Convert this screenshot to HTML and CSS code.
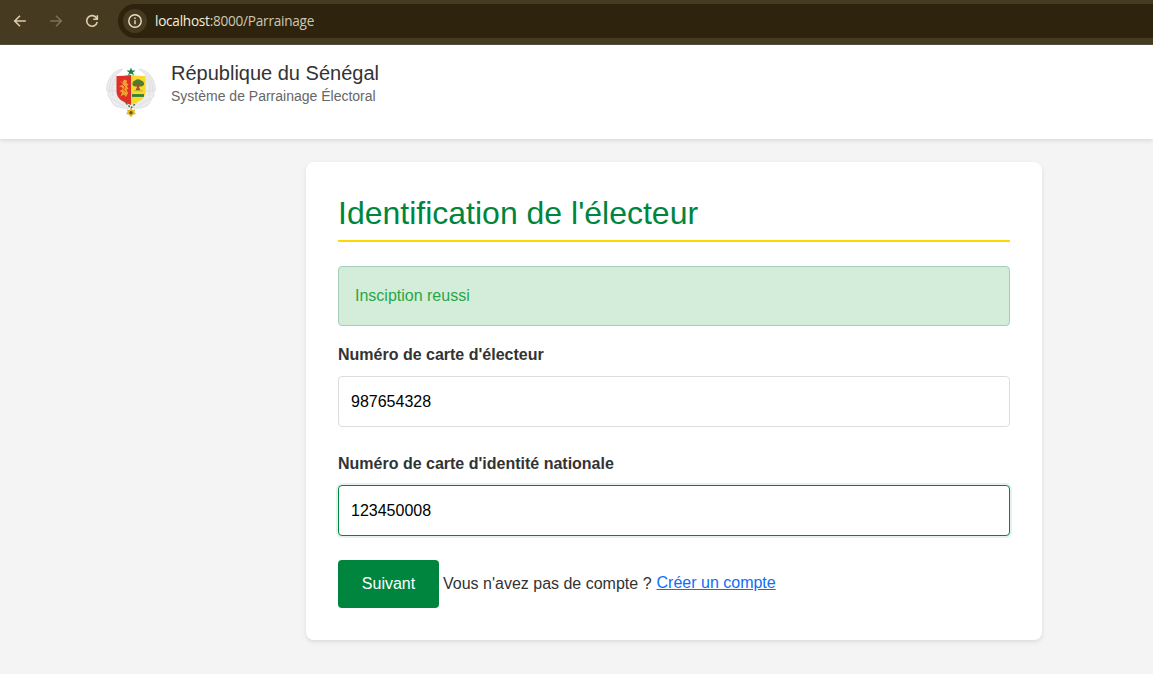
FILE: index.html
```html
<!DOCTYPE html>
<html lang="fr">
<head>
<meta charset="utf-8">
<title>Parrainage</title>
<link rel="stylesheet" href="styles.css">
</head>
<body>
<div class="browser">
  <svg class="nav" width="16" height="16" viewBox="0 0 16 16"><path d="M13.8 8H3M8 2.7 2.7 8 8 13.3"/></svg>
  <svg class="nav nav-off" width="16" height="16" viewBox="0 0 16 16"><path d="M2.2 8H13M8 2.7 13.3 8 8 13.3"/></svg>
  <svg class="nav" width="16" height="16" viewBox="0 0 16 16"><path d="M12.7 5.4A5.3 5.3 0 1 0 13.2 9M13.3 2.3V6.3H9.2"/></svg>
  <div class="address">
    <span class="info"><svg width="16" height="16" viewBox="0 0 16 16"><circle cx="8" cy="8" r="6.2"/><path d="M8 7.2V11.3M8 4.5V6"/></svg></span>
    <span class="url"><b>localhost</b>:8000/Parrainage</span>
  </div>
</div>
<header class="header">
  <svg class="logo" width="50" height="50" viewBox="0 0 50 50">
    <g fill="#ececec" stroke="#d8d8d8" stroke-width=".7">
      <path d="M17 2C8 3 1 11 .5 23 2 25 3 26 2 29 6 33 6 39 12 40 17 41 20 42 23 41L23 35 11 27 10 8Z"/>
      <path d="M33 2C42 3 49 11 49.500 23 48 25 47 26 48 29 44 33 44 39 38 40 33 41 30 42 27 41L27 35 39 27 40 8Z"/>
      <path fill="none" d="M8 8Q3 15 3 24M9 12Q4 19 7 29M2 24H10M5 31 18 39M42 8Q47 15 47 24M41 12Q46 19 43 29M48 24H40M45 31 32 39"/>
    </g>
    <path fill="#df3027" d="M10.500 9Q18 9 25 8V38C17 35 10.500 32 10.500 24Z"/>
    <path fill="#f7d92e" d="M25 8Q32 9 39.500 9V24C39.500 32 33 35 25 38Z"/>
    <path fill="#f0a030" d="M14 14 16.500 15.500 18 12.500 21 13.500 20.500 16 22.500 17.500 21 19 22.500 22 20.500 22.500 22 26 20 30 18 27.500 14.500 29.500 16 25.500 13.500 24 17 22 15.500 20 13 19.500 17 17.500Z"/>
    <path fill="none" stroke="#df3027" stroke-width=".8" d="M17 18 19 20 17.500 23 20 25M15 16H17"/>
    <path fill="#4d7d2d" d="M26.500 18Q26 14 29 13.500 32 11 35 13.500 38.500 14 38 18 35 20.500 32 19 28.500 20.500 26.500 18Z"/>
    <path fill="#a0522d" d="M30 17H34L33 20 34.500 23.500H29.500L31 20Z"/>
    <path stroke="#b9b62c" stroke-width="1" d="M28 23.800H37"/>
    <path stroke="#31813d" stroke-width="2.800" d="M26 28.500H38"/>
    <path fill="#138447" d="M25 .5 26.200 3.500H29.500L26.900 5.400 28 8.500 25 6.600 22 8.500 23.100 5.400 20.500 3.500H23.800Z"/>
    <path stroke="#20784a" stroke-width="1.500" stroke-dasharray="2 1.500" d="M20 36 25 41 30 36" fill="none"/>
    <path fill="#e5b928" d="M25 41 26.500 43 29 42.500 28.500 45 30 47 27.500 47.500 25 50 22.500 47.500 20 47 21.500 45 21 42.500 23.500 43Z"/>
    <circle cx="25" cy="45.700" r="1.700" fill="#625a24"/>
  </svg>
  <div>
    <div class="state">République du Sénégal</div>
    <div class="system">Système de Parrainage Électoral</div>
  </div>
</header>
<main class="card">
  <h1 class="title">Identification de l'électeur</h1>
  <div class="alert">Insciption reussi</div>
  <form>
    <label class="label" for="voter">Numéro de carte d'électeur</label>
    <input class="field" id="voter" type="text" value="987654328">
    <label class="label" for="identity">Numéro de carte d'identité nationale</label>
    <input class="field field-active" id="identity" type="text" value="123450008">
    <div class="actions">
      <button class="submit" type="button">Suivant</button>
      <span class="question">Vous n'avez pas de compte ?</span>
      <a class="link" href="#">Créer un compte</a>
    </div>
  </form>
</main>
</body>
</html>
```
FILE: styles.css
```css
* { box-sizing: border-box; }
body {
  margin: 0;
  height: 674px;
  overflow: hidden;
  background: #f4f4f4;
  color: #333;
  font: 16px/24px "Liberation Sans", Arial, sans-serif;
}
.browser {
  display: flex;
  align-items: center;
  gap: 20px;
  height: 45px;
  padding: 0 0 3px 12px;
  background: #463a20;
  border-bottom: 1px solid #54503f;
}
.nav { flex: none; fill: none; stroke: #dccda8; stroke-width: 1.6; }
.nav-off { stroke: #7d7155; }
.address {
  display: flex;
  align-items: center;
  flex: 1;
  gap: 8px;
  height: 34px;
  margin-left: -2px;
  padding-left: 5px;
  background: #2e240e;
  border-radius: 17px 0 0 17px;
}
.info {
  display: grid;
  place-items: center;
  width: 24px;
  height: 24px;
  border-radius: 50%;
  background: #463a20;
}
.info svg { fill: none; stroke: #ebe0c7; stroke-width: 1.4; }
.url { font: 13.600px/20px "Open Sans", "Noto Sans", sans-serif; color: #cfc7b2; letter-spacing: -.25px; }
.url b { font-weight: 400; color: #f5eedc; }
.header {
  display: flex;
  gap: 15px;
  height: 94px;
  padding: 16px 106px;
  background: #fff;
  box-shadow: 0 2px 4px rgba(0, 0, 0, .1);
}
.logo { margin-top: 6px; }
.state { font-size: 20px; line-height: 24px; }
.system { font-size: 14px; line-height: 22px; color: #666; }
.card {
  width: 736px;
  height: 478px;
  margin: 23px 0 0 306px;
  padding: 32px;
  background: #fff;
  border-radius: 8px;
  box-shadow: 0 2px 4px rgba(0, 0, 0, .1);
}
.title {
  height: 48px;
  margin: 0 0 24px;
  border-bottom: 2px solid #fdd900;
  font-size: 32px;
  font-weight: 400;
  line-height: 38px;
  color: #00853f;
}
.alert {
  height: 60px;
  margin-bottom: 16px;
  padding: 17px 16px;
  border: 1px solid #a3cfbb;
  border-radius: 4px;
  background: #d4edda;
  color: #28a745;
}
.label { display: block; margin-bottom: 8px; font-weight: 700; line-height: 26px; }
.field {
  display: block;
  width: 100%;
  height: 51px;
  margin-bottom: 24px;
  padding: 12px;
  border: 1px solid #ddd;
  border-radius: 4px;
  outline: 0;
  background: #fff;
  color: #000;
  font: inherit;
}
.field-active { border-color: #00853f; box-shadow: 0 0 0 2px rgba(0, 133, 63, .1); }
.actions { display: flex; align-items: center; }
.submit {
  width: 101px;
  height: 48px;
  margin-right: 4px;
  padding: 0;
  border: 0;
  border-radius: 4px;
  background: #00853f;
  color: #fff;
  font: inherit;
}
.question { margin-right: 5px; }
.link { color: #0d6efd; margin-top: -2px; }
```
